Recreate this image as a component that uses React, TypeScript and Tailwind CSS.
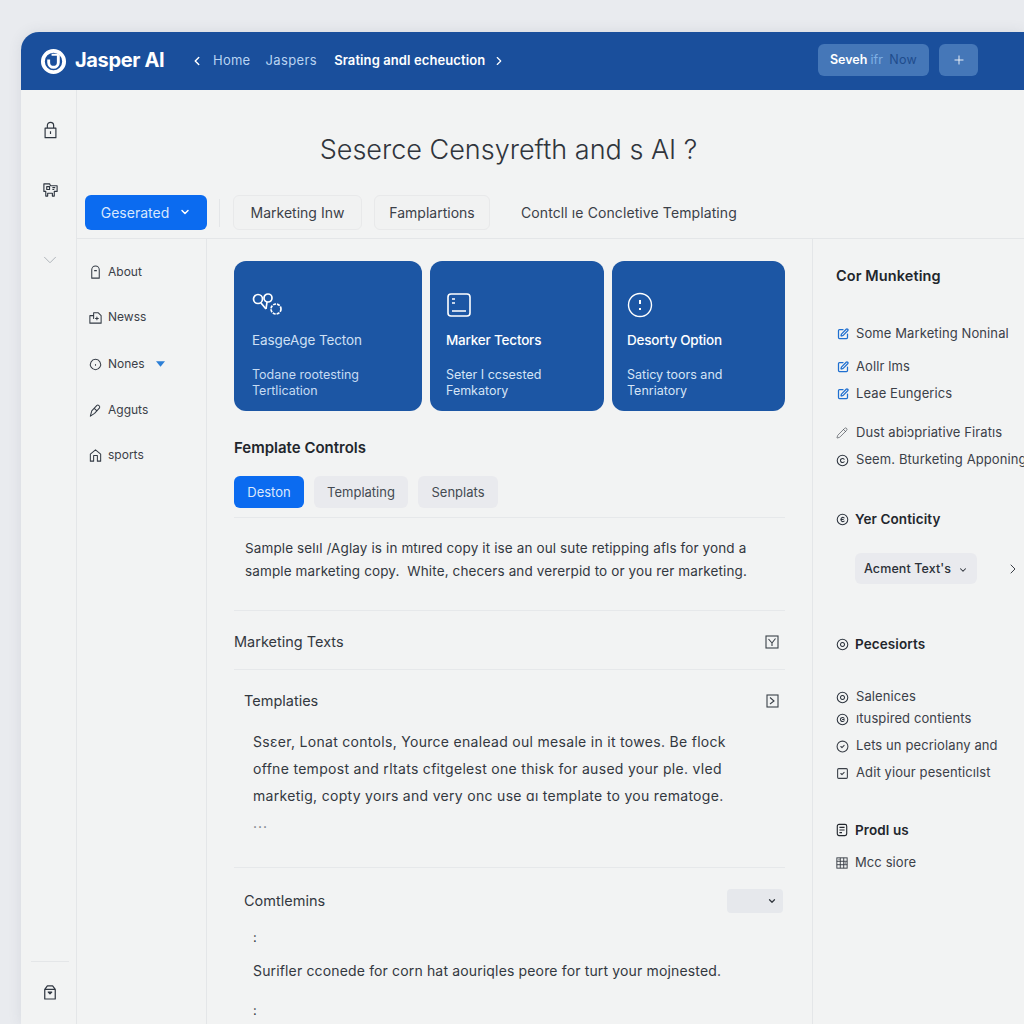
import React from 'react';
import { ChevronDown, ChevronLeft, ChevronRight, Plus, SquarePen, Pencil, CircleCheck, SquareCheck } from 'lucide-react';

const NAV_ITEMS = [
  { label: 'About', gap: '', icon: <path d="M4 14V5a4 4 0 0 1 8 0v9zM7 6h2" /> },
  { label: 'Newss', gap: 'mt-[29px]', icon: <path d="M2 6h4V3h5l3 3v8H2zM6 6v3M8 9h3M9.500 7.500v3" /> },
  { label: 'Nones', gap: 'mt-[31px]', icon: <path d="M8 2.500a5.500 5.500 0 1 0 .01 0zM8 8v.8" /> },
  { label: 'Agguts', gap: 'mt-[30px]', icon: <path d="M2.500 14l1.500-5.500 5.500-6c1.200-1 3.800.8 2.800 2.800L7 11zM7 6l2.500 2.500" /> },
  { label: 'sports', gap: 'mt-[29px]', icon: <path d="M2.500 14V6.500L8 2l5.500 4.500V14H10V8H6v6z" /> },
];

function NavIcon({ children }: { children: React.ReactNode }) {
  return (
    <svg viewBox="0 0 16 16" className="w-[15px] h-[15px] shrink-0 text-[#333a44]" fill="none" stroke="currentColor" strokeWidth="1.100" strokeLinejoin="round" strokeLinecap="round">
      {children}
    </svg>
  );
}

function CircleDot({ inner }: { inner: string }) {
  return (
    <svg viewBox="0 0 16 16" className="w-[13px] h-[13px] shrink-0 text-[#2f3640]" fill="none" stroke="currentColor" strokeWidth="1.300" strokeLinecap="round">
      <circle cx="8" cy="8" r="6.500" />
      <path d={inner} />
    </svg>
  );
}

function BlueCheck() {
  return <SquarePen className="w-[12px] h-[12px] shrink-0 ml-px text-[#1f6fd0]" strokeWidth={2.500} />;
}

export default function App() {
  return (
    <div className="h-[1024px] w-[1024px] overflow-hidden bg-[#e9ebef] pt-8 pl-[21px] font-['Inter',sans-serif] text-[#2b3038]">
      <div className="h-[992px] w-[1003px] rounded-tl-[18px] overflow-hidden bg-[#f2f3f3] flex flex-col shadow-[0_0_14px_rgba(60,70,90,0.10)]">
        <header className="h-[58px] shrink-0 bg-[#1a4f9c] flex items-center pl-[19px] text-white">
          <svg viewBox="0 0 28 28" className="w-[27px] h-[27px] shrink-0" fill="none">
            <circle cx="14" cy="14" r="11" stroke="white" strokeWidth="4" />
            <path d="M9 12v3a5 5 0 0 0 10 0V6.500" stroke="white" strokeWidth="3" />
            <path d="M12 7h7" stroke="white" strokeWidth="2" />
          </svg>
          <span className="ml-[8px] -mt-[2px] text-[20px] font-bold tracking-[-0.35px] w-[98px] whitespace-nowrap">Jasper AI</span>
          <ChevronLeft className="w-[14px] h-[14px] ml-[17px]" strokeWidth={2.500} />
          <span className="ml-[9px] text-[13px] tracking-[0.25px] text-[#b9d4f2]">Home</span>
          <span className="ml-[15px] text-[13px] tracking-[0.4px] text-[#b9d4f2]">Jaspers</span>
          <span className="ml-[17px] text-[13px] font-semibold whitespace-nowrap tracking-[0.1px]">Srating andl echeuction</span>
          <ChevronRight className="w-[14px] h-[14px] ml-[7px]" strokeWidth={2} />
          <button className="ml-auto -mt-[2px] h-[32px] w-[111px] rounded-md bg-[#4577b8] text-[12.500px] font-semibold flex items-center justify-center whitespace-nowrap">
            Seveh&nbsp;<span className="text-[#7fb0e4] font-normal">ifr</span>&nbsp;&nbsp;<span className="text-[#1f4c8d] font-normal tracking-[0.3px]">Now</span>
          </button>
          <button className="ml-[10px] -mt-[2px] mr-[46px] h-[32px] w-[39px] rounded-md bg-[#4577b8] flex items-center justify-center">
            <Plus className="w-[14px] h-[14px]" strokeWidth={1.500} />
          </button>
        </header>

        <div className="flex-1 flex min-h-0">
          <aside className="w-[56px] shrink-0 border-r border-[#e4e6e8] flex flex-col items-center pt-[31px] pb-[24px] pl-[3px]">
            <svg viewBox="0 0 16 20" className="w-[15px] h-[18px] text-[#2f3640]" fill="none" stroke="currentColor" strokeWidth="1.300" strokeLinejoin="round">
              <path d="M2 8h12v10.500H2zM4.500 8V5a3.500 3.500 0 0 1 7 0v3M8 11.500v3" />
            </svg>
            <svg viewBox="0 0 18 18" className="w-[17px] h-[17px] mt-[42px] text-[#2f3640]" fill="none" stroke="currentColor" strokeWidth="1.200" strokeLinejoin="round">
              <path d="M2 3h6l1 2h7v6h-3v5h-2v-3H6v3H4v-5H2zM5 6h3v3H5zM11 7h3M11 9h2" />
            </svg>
            <ChevronDown className="w-[22px] h-[22px] mt-[51px] text-[#a9aeb5]" strokeWidth={1} />
            <div className="mt-auto w-[38px] border-t border-[#e4e6e8] pt-[22px] flex justify-center">
              <svg viewBox="0 0 16 18" className="w-[14px] h-[16px] text-[#2f3640]" fill="none" stroke="currentColor" strokeWidth="1.400" strokeLinejoin="round">
                <path d="M2 6l3-4h6l3 4v11H2zM2 6h12M6 9h4l-2 2z" />
              </svg>
            </div>
          </aside>

          <div className="flex-1 min-w-0 flex flex-col">
            <h1 className="pt-[42px] h-[105px] text-center text-[27px] leading-[36px] font-light text-[#30353c] pr-[84px] whitespace-nowrap">
              Seserce Censyrefth and s AI ?
            </h1>

            <div className="h-[44px] flex items-start pl-2 border-b border-[#e4e6e8] text-[14px] text-[#3b4048]">
              <button className="h-[35px] w-[122px] pb-px rounded-md bg-[#0b6bf0] text-white flex items-center justify-center gap-[10px]">
                <span className="text-[#d7e7fd]">Geserated</span>
                <ChevronDown className="w-[12px] h-[12px]" strokeWidth={3} />
              </button>
              <div className="h-[28px] mt-[4px] ml-[12px] border-l border-[#e4e6e8]" />
              <button className="ml-[13px] h-[35px] w-[129px] pb-px rounded-md border border-[#e8e9ea] bg-[#f1f2f2]">Marketing Inw</button>
              <button className="ml-[12px] h-[35px] w-[116px] pb-px rounded-md border border-[#e8e9ea] bg-[#f1f2f2]">Famplartions</button>
              <span className="ml-[31px] h-[34px] flex items-center whitespace-nowrap tracking-[0.1px]">Contcll ıe Concletive Templating</span>
            </div>

            <div className="flex-1 min-h-0 flex">
              <nav className="w-[130px] shrink-0 border-r border-[#e4e6e8] pt-[25px] pl-[11px]">
                {NAV_ITEMS.map(item => (
                  <div key={item.label} className={`flex items-center gap-[5px] h-[16px] text-[12px] text-[#3b4048] ${item.gap}`}>
                    <NavIcon>{item.icon}</NavIcon>
                    <span>{item.label}</span>
                    {item.label === 'Nones' && (
                      <svg viewBox="0 0 10 6" className="w-[9px] h-[6px] ml-[6px] text-[#2c7fd6]" fill="currentColor"><path d="M0 0h10L5 6z" /></svg>
                    )}
                  </div>
                ))}
              </nav>

              <main className="w-[606px] shrink-0 px-[27px] pt-[22px] border-r border-[#e4e6e8]">
                <div className="grid grid-cols-[188px_174px_173px] gap-2">
                  <div className="h-[150px] rounded-xl bg-[#1c56a4] pt-[31px] px-[18px] text-white">
                    <svg viewBox="0 0 32 26" className="w-[32px] h-[26px]" fill="none" stroke="white" strokeWidth="1.700">
                      <circle cx="6" cy="7" r="4.500" /><path d="M9 11l5 6" />
                      <circle cx="16" cy="6" r="4" /><path d="M15 10l-1 7" />
                      <circle cx="24" cy="17" r="5" strokeDasharray="3 1" />
                    </svg>
                    <div className="mt-[12px] text-[13.500px] tracking-[-0.1px] text-[#cfe0f4]">EasgeAge Tecton</div>
                    <div className="mt-[17px] text-[12.500px] leading-[16px] text-[#c6dbf3]">Todane rootesting<br />Tertlication</div>
                  </div>
                  <div className="h-[150px] rounded-xl bg-[#1c56a4] pt-[31px] px-[16px] text-white">
                    <svg viewBox="0 0 26 26" className="w-[26px] h-[26px]" fill="none" stroke="white" strokeWidth="1.600">
                      <rect x="2" y="2" width="22" height="22" rx="3" />
                      <path d="M6 7h3M6 11h3M6 19h14" />
                    </svg>
                    <div className="mt-[12px] text-[13.500px] font-medium tracking-[-0.2px]">Marker Tectors</div>
                    <div className="mt-[17px] text-[12.500px] leading-[16px] text-[#d5e4f6]">Seter I ccsested<br />Femkatory</div>
                  </div>
                  <div className="h-[150px] rounded-xl bg-[#1c56a4] pt-[31px] px-[15px] text-white">
                    <svg viewBox="0 0 26 26" className="w-[26px] h-[26px]" fill="none" stroke="white" strokeWidth="1.400">
                      <circle cx="13" cy="13" r="11.500" />
                      <path d="M13 8v4M13 16v2" strokeWidth="2" />
                    </svg>
                    <div className="mt-[12px] text-[13.500px] font-medium tracking-[-0.2px]">Desorty Option</div>
                    <div className="mt-[17px] text-[12.500px] leading-[16px] text-[#d5e4f6]">Saticy toors and<br />Tenriatory</div>
                  </div>
                </div>

                <h2 className="mt-[28px] text-[15px] leading-[18px] font-semibold text-[#22262c]">Femplate Controls</h2>

                <div className="mt-[19px] flex gap-[10px] text-[13px] pb-[9px] border-b border-[#e6e8ea]">
                  <button className="h-[32px] w-[70px] pt-px rounded-md bg-[#0b6bf0] text-[#dbe9fd]">Deston</button>
                  <button className="h-[32px] w-[94px] pt-px rounded-md bg-[#e9eaee] text-[#444a52]">Templating</button>
                  <button className="h-[32px] w-[80px] pt-px rounded-md bg-[#e9eaee] text-[#444a52]">Senplats</button>
                </div>

                <p className="mt-[19px] pl-[11px] text-[13.500px] tracking-[0.12px] leading-[23px] text-[#33383f] whitespace-nowrap">
                  Sample selıl /Aglay is in mtıred copy it ise an oul sute retipping afls for yond a<br />
                  sample marketing copy.&nbsp; White, checers and vererpid to or you rer marketing.
                </p>

                <div className="mt-[27px] border-t border-[#e6e8ea] h-[59px] pt-[4px] flex items-center justify-between pr-[6px] text-[14.500px] text-[#33383f]">
                  <span>Marketing Texts</span>
                  <svg viewBox="0 0 14 14" className="w-[14px] h-[14px]" fill="none" stroke="#3a4048" strokeWidth="1.100">
                    <rect x="1" y="1" width="12" height="12" /><path d="M3.500 4L7 8l3.500-4.500M7 8v3" />
                  </svg>
                </div>

                <div className="border-t border-[#e6e8ea] pt-[21px] pl-[10px]">
                  <div className="flex items-center justify-between pr-[6px] h-[20px] text-[14.500px] text-[#33383f]">
                    <span>Templaties</span>
                    <svg viewBox="0 0 14 14" className="w-[14px] h-[14px]" fill="none" stroke="#3a4048" strokeWidth="1.100">
                      <rect x="2" y="1" width="11" height="12" /><path d="M5 3.500l4 3.500-4 3" />
                    </svg>
                  </div>
                  <p className="mt-[17px] pl-[9px] text-[14px] tracking-[0.3px] leading-[27px] text-[#33383f] whitespace-nowrap">
                    Ssɛer, Lonat contols, Yource enalead oul mesale in it towes. Be flock<br />
                    offne tempost and rltats cfitgelest one thisk for aused your ple. vled<br />
                    marketig, copty yoırs and very onc use ɑı template to you rematoge.<br />
                    <span className="text-[#777c84] tracking-[1px]">...</span>
                  </p>
                </div>

                <div className="mt-[31px] border-t border-[#e6e8ea] pt-[21px] pl-[10px]">
                  <div className="flex items-center justify-between h-[24px] text-[14.500px] text-[#33383f]">
                    <span>Comtlemins</span>
                    <div className="w-[56px] h-[24px] rounded bg-[#e6e8ec] flex items-center justify-end pr-[6px] mr-[2px]">
                      <ChevronDown className="w-[10px] h-[10px]" strokeWidth={3} />
                    </div>
                  </div>
                  <div className="mt-[14px] pl-[9px] text-[13px] leading-[20px] text-[#33383f]">:</div>
                  <p className="mt-[14px] pl-[9px] text-[14px] tracking-[0.15px] leading-[20px] text-[#33383f] whitespace-nowrap">
                    Surifler cconede for corn hat aouriqles peore for turt your mojnested.
                  </p>
                  <div className="mt-[19px] pl-[9px] text-[13px] leading-[20px] text-[#33383f]">:</div>
                </div>
              </main>

              <aside className="flex-1 min-w-0 pt-[28px] pl-[23px] text-[13px] tracking-[0.1px] text-[#3b4048] whitespace-nowrap overflow-hidden">
                <h3 className="h-[18px] leading-[18px] text-[14.500px] font-semibold text-[#22262c]">Cor Munketing</h3>
                <div className="mt-[41px] h-[16px] flex items-center gap-[7px]"><BlueCheck />Some Marketing Noninal</div>
                <div className="mt-[17px] h-[16px] flex items-center gap-[7px]"><BlueCheck />Aollr lms</div>
                <div className="mt-[11px] h-[16px] flex items-center gap-[7px]"><BlueCheck />Leae Eungerics</div>
                <div className="mt-[23px] h-[16px] flex items-center gap-[8px]"><Pencil className="w-[12px] h-[12px] shrink-0" strokeWidth={1.250} />Dust abiɔpriative Firatıs</div>
                <div className="mt-[11px] h-[16px] flex items-center gap-[7px]"><CircleDot inner="M10 6.500a2.500 2.500 0 1 0 0 3" />Seem. Bturketing Apponing</div>

                <h3 className="mt-[42px] h-[18px] flex items-center gap-[6px] text-[13.500px] font-semibold text-[#22262c]"><CircleDot inner="M10 6a2.500 2.500 0 1 0 0 4M6 8h3" />Yer Conticity</h3>
                <div className="mt-[25px] ml-[19px] flex items-center">
                  <div className="h-[31px] w-[122px] pt-[2px] rounded-md bg-[#e9eaee] flex items-center pl-[9px] gap-[7px] text-[12.500px] font-medium text-[#2b3038]">
                    Acment Text's <ChevronDown className="w-[10px] h-[10px]" strokeWidth={2.500} />
                  </div>
                  <ChevronRight className="w-[16px] h-[16px] ml-[28px]" strokeWidth={1.500} />
                </div>

                <h3 className="mt-[51px] h-[18px] flex items-center gap-[6px] text-[13.500px] font-semibold text-[#22262c]"><CircleDot inner="M8 5.500a2.500 2.500 0 1 0 .01 0" />Pecesiorts</h3>
                <div className="mt-[36px] h-[16px] flex items-center gap-[7px]"><CircleDot inner="M8 5.500a2.500 2.500 0 1 0 .01 0" />Salenices</div>
                <div className="mt-[6px] h-[16px] flex items-center gap-[7px]"><CircleDot inner="M10 6.500a2.500 2.500 0 1 0 0 3M8 8h2" />ıtuspired contients</div>
                <div className="mt-[11px] h-[16px] flex items-center gap-[7px]"><CircleCheck className="w-[13px] h-[13px] shrink-0" strokeWidth={2} />Lets un pecriolany and</div>
                <div className="mt-[11px] h-[16px] flex items-center gap-[7px]"><SquareCheck className="w-[13px] h-[13px] shrink-0" strokeWidth={2} />Adit yiour pesenticılst</div>

                <h3 className="mt-[40px] h-[18px] flex items-center gap-[7px] text-[13.500px] font-semibold text-[#22262c]">
                  <svg viewBox="0 0 14 16" className="w-[12px] h-[14px] shrink-0" fill="none" stroke="currentColor" strokeWidth="1.300"><rect x="1.500" y="1.500" width="11" height="13" rx="2" /><path d="M4 5h6M4 8h6M4 11h3" /></svg>
                  Prodl us
                </h3>
                <div className="mt-[16px] h-[16px] flex items-center gap-[7px]">
                  <svg viewBox="0 0 14 14" className="w-[12px] h-[12px] shrink-0" fill="none" stroke="currentColor" strokeWidth="1.100"><rect x="1" y="1" width="12" height="12" /><path d="M1 5h12M1 9h12M5 1v12M9 1v12M3 3h1M10 7h2" /></svg>
                  Mcc siore
                </div>
              </aside>
            </div>
          </div>
        </div>
      </div>
    </div>
  );
}
